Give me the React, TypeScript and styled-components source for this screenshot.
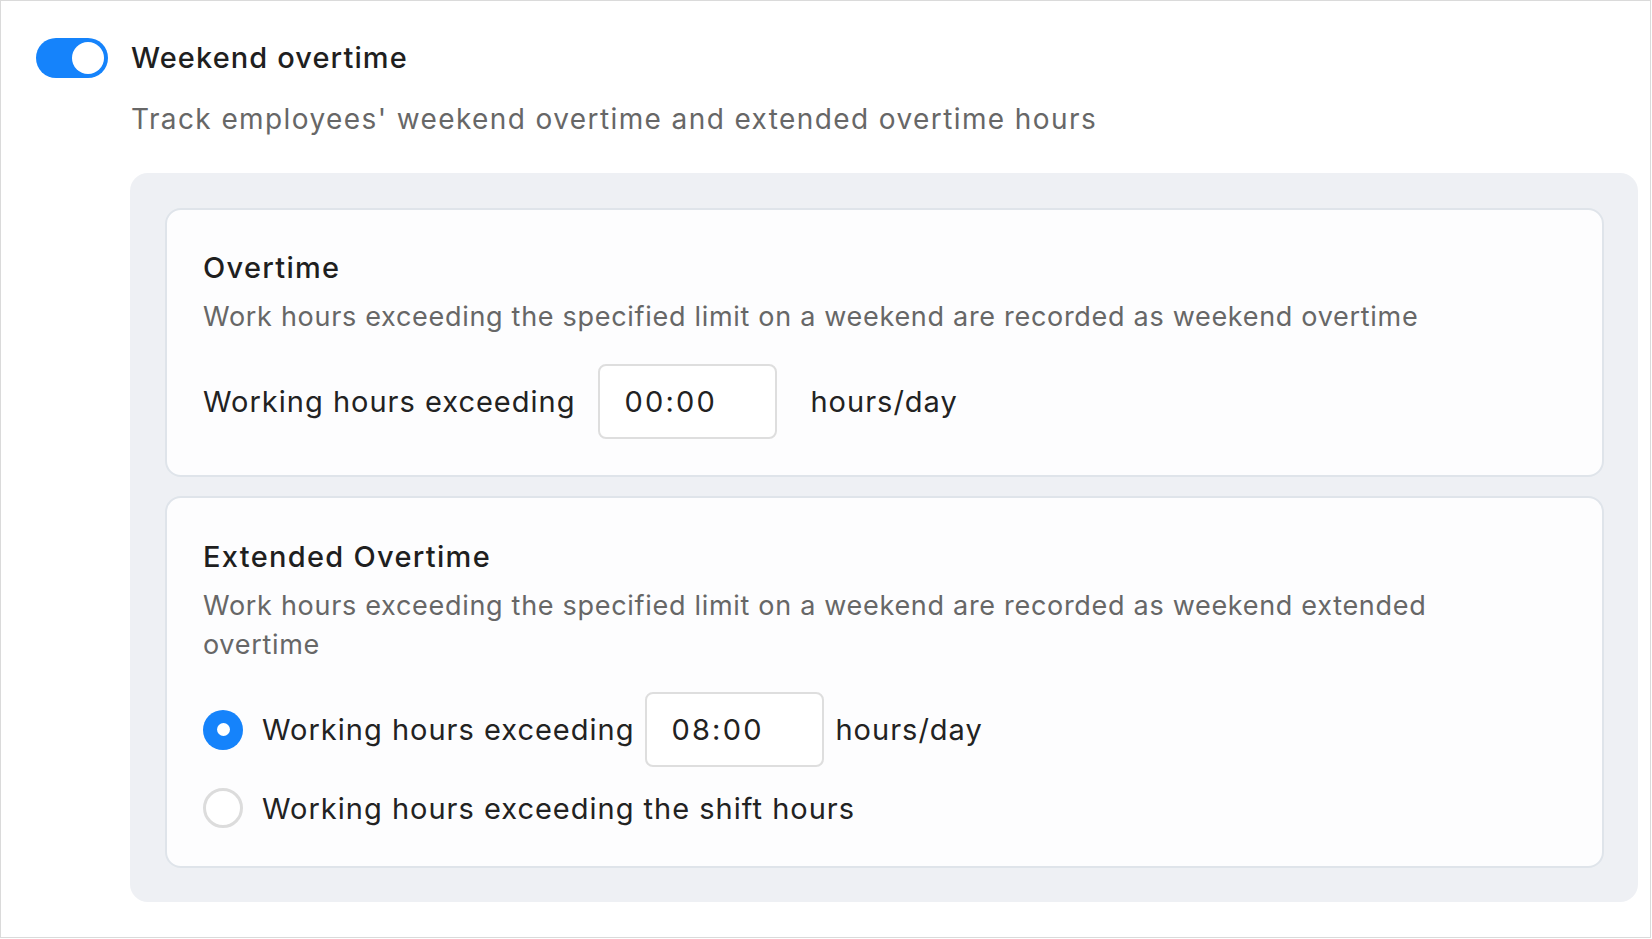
import styled, { createGlobalStyle } from 'styled-components';

const GlobalStyle = createGlobalStyle`
  html, body {
    margin: 0;
    padding: 0;
    background: #ffffff;
  }
  body {
    font-family: Inter, "Noto Sans", sans-serif;
    color: #222222;
  }
  * {
    box-sizing: border-box;
  }
`;

const Page = styled.div`
  width: 1651px;
  height: 938px;
  border: 1px solid #dadada;
  background: #ffffff;
  padding: 37px 12px 0 35px;
`;

const Header = styled.div`
  display: flex;
  align-items: center;
  gap: 23px;
  height: 40px;
`;

const Toggle = styled.div<{ on: boolean }>`
  width: 72px;
  height: 40px;
  border-radius: 20px;
  background: ${(props) => (props.on ? '#1583fb' : '#cfd3d9')};
  padding: 4px;
  display: flex;
  justify-content: ${(props) => (props.on ? 'flex-end' : 'flex-start')};

  &::after {
    content: '';
    width: 32px;
    height: 32px;
    border-radius: 50%;
    background: #ffffff;
  }
`;

const Title = styled.div`
  font-size: 29px;
  font-weight: 500;
  letter-spacing: 1.1px;
  line-height: 40px;
  color: #1f1f1f;
`;

const Body = styled.div`
  padding-left: 94px;
`;

const Lead = styled.p`
  margin: 22px 0 0 1px;
  font-size: 28px;
  letter-spacing: 1.4px;
  line-height: 39px;
  color: #676767;
`;

const Panel = styled.div`
  margin-top: 34px;
  background: #eef0f4;
  border-radius: 18px;
  padding: 35px 34px 34px 35px;
  display: flex;
  flex-direction: column;
  gap: 19px;
`;

const Card = styled.div<{ pt: number; pb: number }>`
  background: #fdfdfe;
  border: 2px solid #dfe4ea;
  border-radius: 16px;
  padding: ${(props) => `${props.pt}px 36px ${props.pb}px 36px`};
`;

const CardTitle = styled.h3`
  margin: 0;
  font-size: 29px;
  font-weight: 500;
  letter-spacing: 1.3px;
  line-height: 39px;
  color: #1f1f1f;
`;

const CardText = styled.p`
  margin: 10px 0 0;
  max-width: 1270px;
  font-size: 27px;
  letter-spacing: 0.7px;
  line-height: 39px;
  color: #676767;
`;

const Row = styled.div<{ top: number }>`
  margin-top: ${(props) => props.top}px;
  display: flex;
  align-items: center;
`;

const Label = styled.span<{ before?: number; after?: number }>`
  margin-left: ${(props) => props.before ?? 0}px;
  margin-right: ${(props) => props.after ?? 0}px;
  font-size: 29px;
  letter-spacing: 1px;
  color: #222222;
`;

const TimeBox = styled.div`
  width: 179px;
  height: 75px;
  border: 2px solid #dedede;
  border-radius: 8px;
  background: #ffffff;
  display: flex;
  align-items: center;
  padding-left: 24px;
  font-size: 29px;
  letter-spacing: 2.2px;
  color: #222222;
`;

const Options = styled.div`
  margin-top: 28px;
  display: flex;
  flex-direction: column;
  gap: 21px;
`;

const Option = styled.label`
  display: flex;
  align-items: center;
  gap: 19px;
`;

const Radio = styled.span<{ checked: boolean }>`
  width: 40px;
  height: 40px;
  border-radius: 50%;
  flex-shrink: 0;
  display: flex;
  align-items: center;
  justify-content: center;
  background: ${(props) => (props.checked ? '#1583fb' : '#ffffff')};
  border: ${(props) => (props.checked ? 'none' : '3px solid #dcdcdc')};

  &::after {
    content: '';
    display: ${(props) => (props.checked ? 'block' : 'none')};
    width: 13px;
    height: 13px;
    border-radius: 50%;
    background: #ffffff;
  }
`;

const InlineRow = styled.div`
  display: flex;
  align-items: center;
  gap: 11px;
`;

export default function App() {
  return (
    <>
      <GlobalStyle />
      <Page>
        <Header>
          <Toggle on />
          <Title>Weekend overtime</Title>
        </Header>
        <Body>
          <Lead>Track employees' weekend overtime and extended overtime hours</Lead>
          <Panel>
            <Card pt={38} pb={36}>
              <CardTitle>Overtime</CardTitle>
              <CardText>
                Work hours exceeding the specified limit on a weekend are recorded as weekend overtime
              </CardText>
              <Row top={28}>
                <Label after={23}>Working hours exceeding</Label>
                <TimeBox>00:00</TimeBox>
                <Label before={33}>hours/day</Label>
              </Row>
            </Card>
            <Card pt={39} pb={38}>
              <CardTitle>Extended Overtime</CardTitle>
              <CardText>
                Work hours exceeding the specified limit on a weekend are recorded as weekend extended
                overtime
              </CardText>
              <Options>
                <Option>
                  <Radio checked />
                  <InlineRow>
                    <Label>Working hours exceeding</Label>
                    <TimeBox>08:00</TimeBox>
                    <Label>hours/day</Label>
                  </InlineRow>
                </Option>
                <Option>
                  <Radio checked={false} />
                  <Label>Working hours exceeding the shift hours</Label>
                </Option>
              </Options>
            </Card>
          </Panel>
        </Body>
      </Page>
    </>
  );
}
